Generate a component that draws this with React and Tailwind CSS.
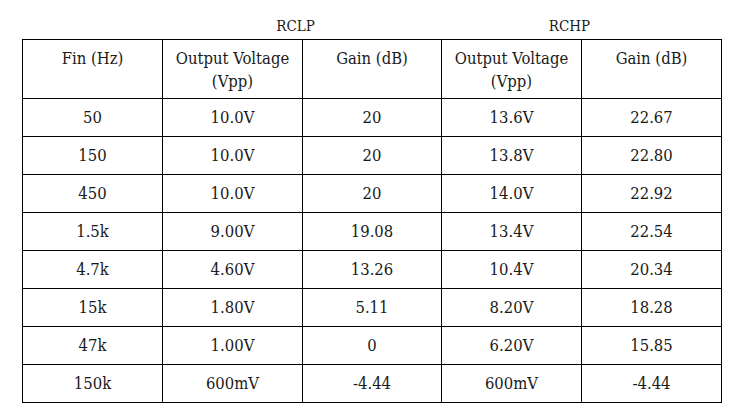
import React from "react";

const rows = [
  ["50", "10.0V", "20", "13.6V", "22.67"],
  ["150", "10.0V", "20", "13.8V", "22.80"],
  ["450", "10.0V", "20", "14.0V", "22.92"],
  ["1.5k", "9.00V", "19.08", "13.4V", "22.54"],
  ["4.7k", "4.60V", "13.26", "10.4V", "20.34"],
  ["15k", "1.80V", "5.11", "8.20V", "18.28"],
  ["47k", "1.00V", "0", "6.20V", "15.85"],
  ["150k", "600mV", "-4.44", "600mV", "-4.44"],
];

export default function App() {
  return (
    <div
      className="w-[750px] h-[418px] bg-white text-[#1a1a1a] overflow-hidden"
      style={{ fontFamily: '"DejaVu Serif Condensed", "DejaVu Serif", serif' }}
    >
      <div className="ml-[23px] w-[697px] h-[39px] pt-[16px] grid grid-cols-[139px_279px_279px] text-[15px] leading-[20px] font-stretch-condensed">
        <div />
        <div className="text-center pr-[12px]">RCLP</div>
        <div className="text-center pr-[22px]">RCHP</div>
      </div>
      <table className="ml-[22px] w-[699px] table-fixed border-collapse text-[16.5px] leading-[23px] font-stretch-condensed">
        <colgroup>
          <col className="w-[140px]" />
          <col className="w-[140px]" />
          <col className="w-[139px]" />
          <col className="w-[140px]" />
          <col className="w-[140px]" />
        </colgroup>
        <thead>
          <tr className="h-[59px]">
            {["Fin (Hz)", "Output Voltage (Vpp)", "Gain (dB)", "Output Voltage (Vpp)", "Gain (dB)"].map(
              (h, i) => (
                <th
                  key={i}
                  className="border border-black align-top pt-[7px] px-[6px] font-normal text-center"
                >
                  {h.includes("(Vpp)") ? (
                    <>
                      Output Voltage
                      <br />
                      (Vpp)
                    </>
                  ) : (
                    h
                  )}
                </th>
              )
            )}
          </tr>
        </thead>
        <tbody>
          {rows.map((r, ri) => (
            <tr key={ri} className="h-[38px]">
              {r.map((c, ci) => (
                <td key={ci} className="border border-black text-center align-middle p-0">
                  {c}
                </td>
              ))}
            </tr>
          ))}
        </tbody>
      </table>
    </div>
  );
}
